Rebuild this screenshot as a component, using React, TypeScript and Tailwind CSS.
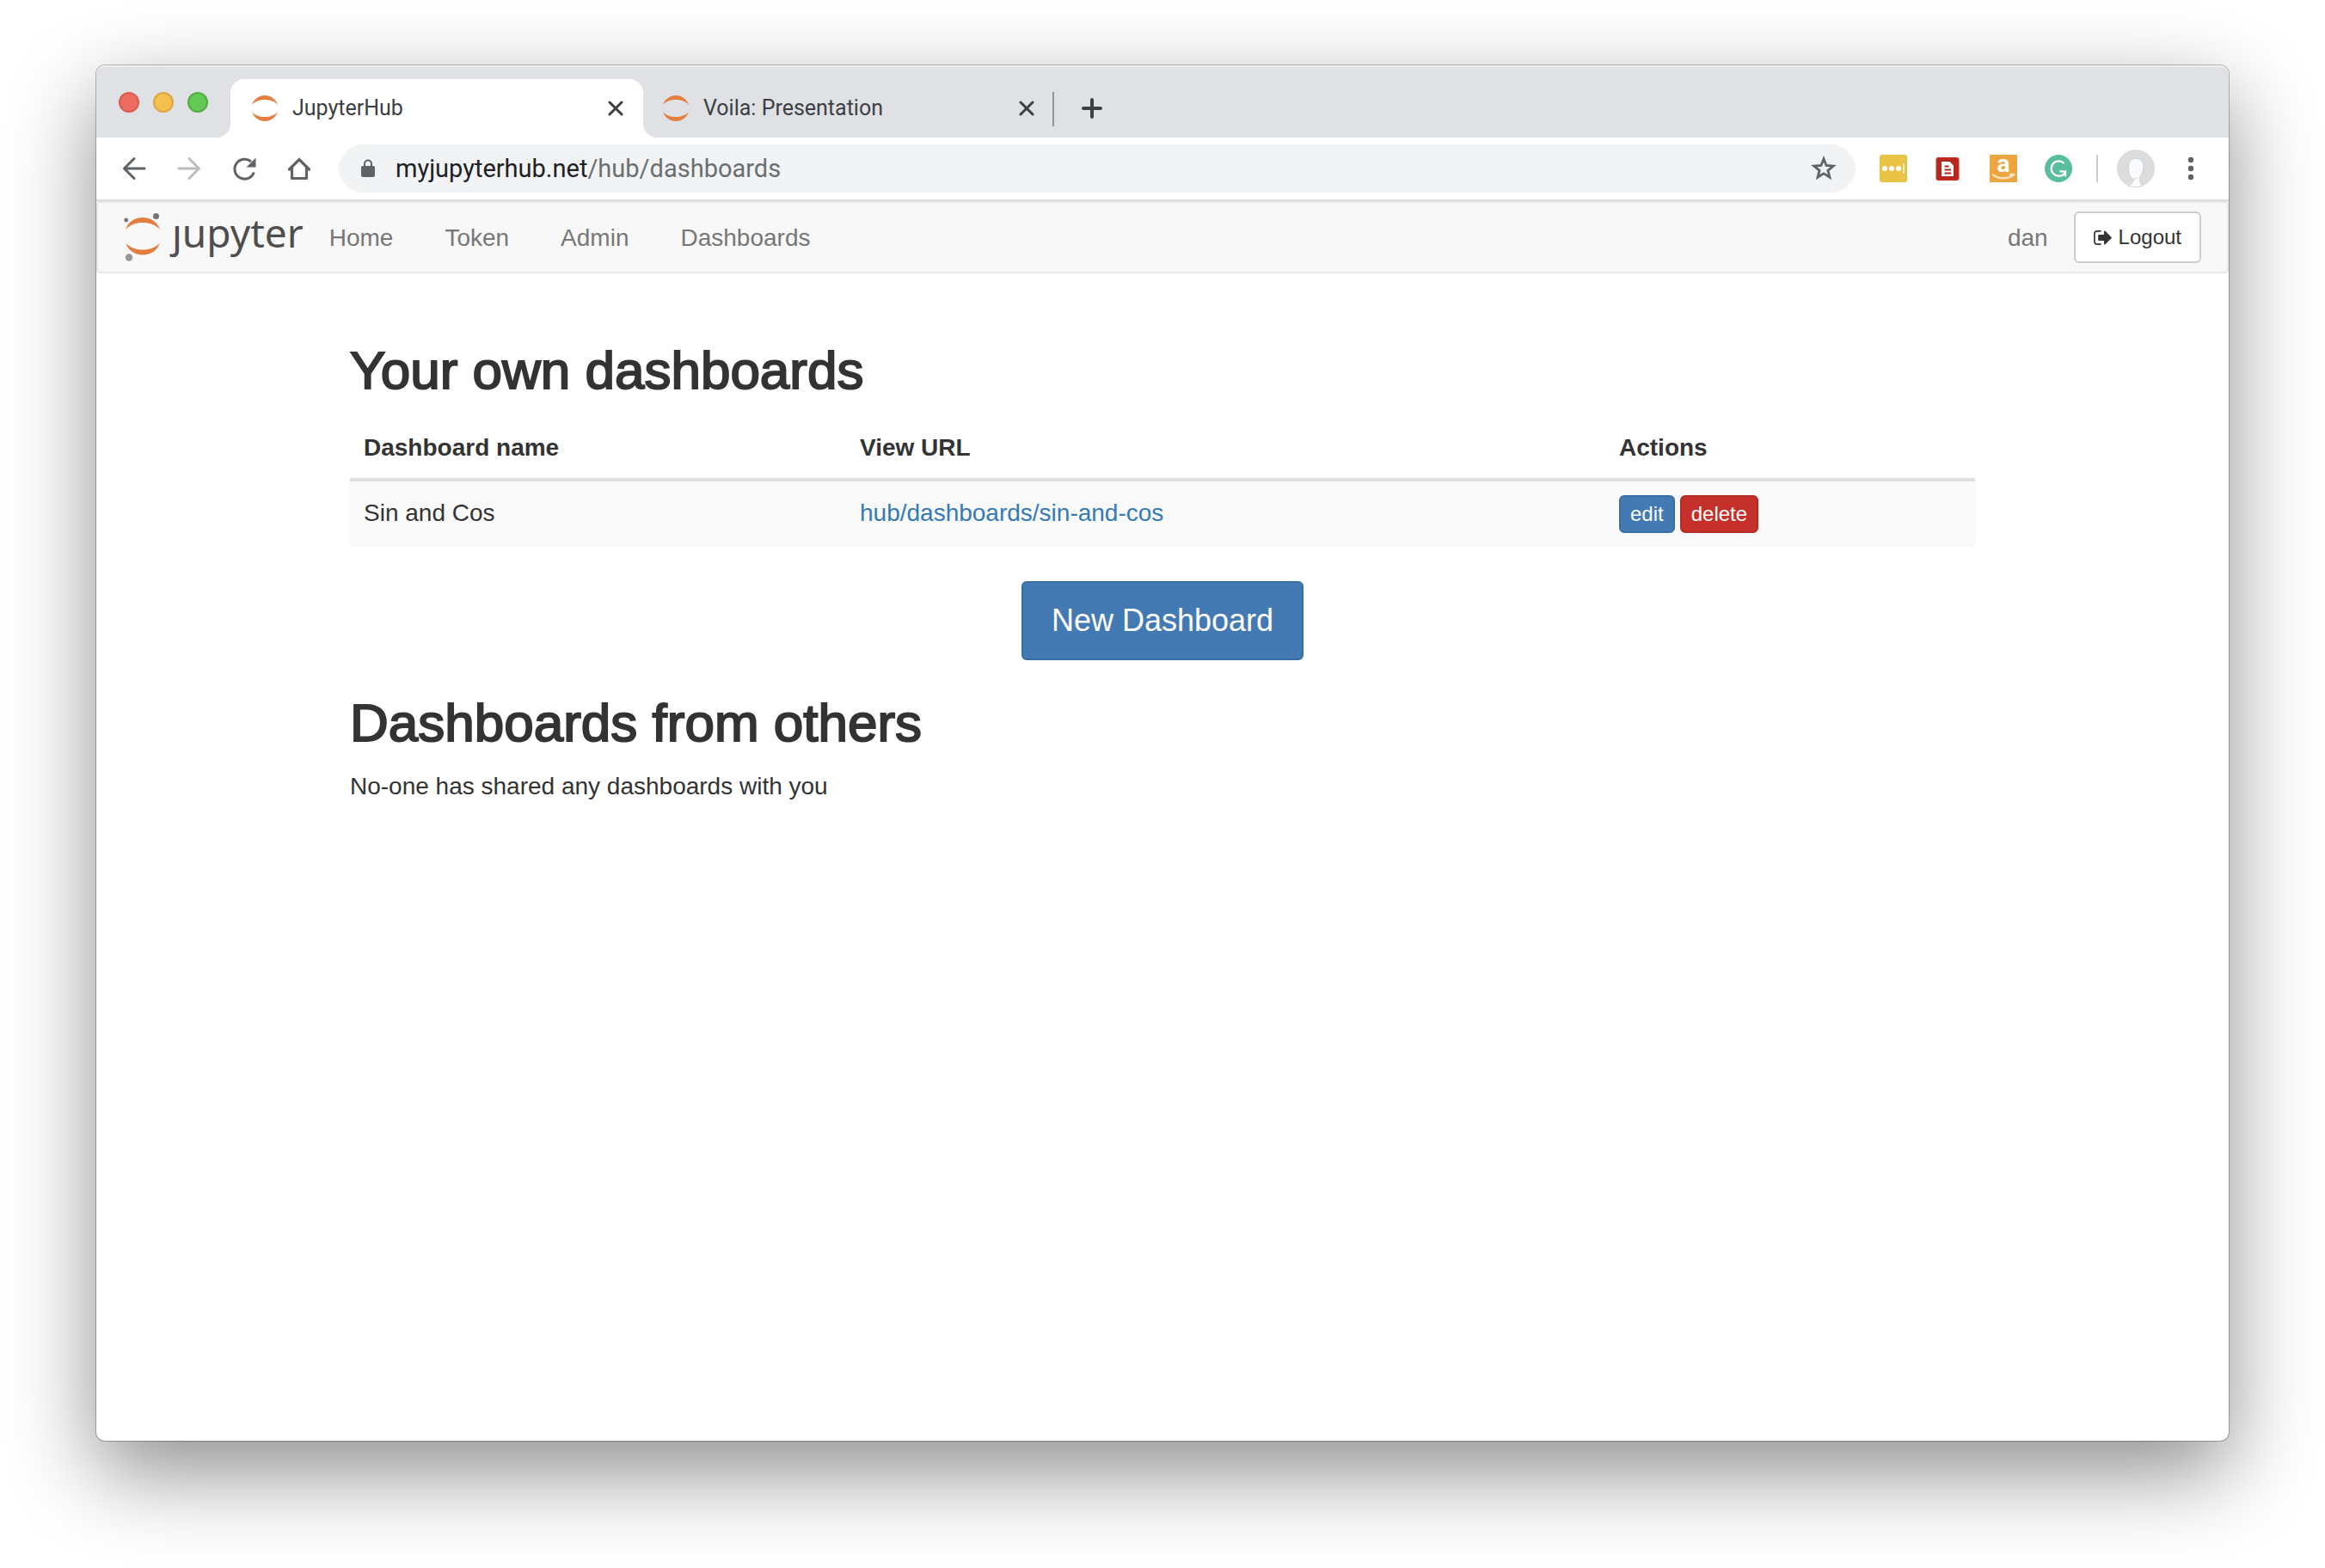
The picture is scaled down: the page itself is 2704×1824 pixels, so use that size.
import type { ReactNode } from "react";

function JupyterArcs({ className }: { className: string }) {
  return (
    <svg viewBox="0 0 30 30" className={className} aria-hidden="true" fill="#e37e3e">
      <path d="M0 10.7C2.4 4.2 8.2 0 15 0s12.600 4.200 15 10.700C26.500 7 21.200 4.900 15 4.900S3.500 7 0 10.700Z" />
      <path d="M0 19.300C2.400 25.800 8.200 30 15 30s12.600-4.200 15-10.700C26.500 23 21.200 25.100 15 25.100S3.500 23 0 19.300Z" />
    </svg>
  );
}

function CloseIcon() {
  return (
    <svg viewBox="0 0 18 18" className="size-[18px]" aria-hidden="true" fill="none" stroke="#3c4043" strokeWidth="3" strokeLinecap="round">
      <path d="M2 2l14 14M16 2L2 16" />
    </svg>
  );
}

function Tab({ title, active }: { title: string; active?: boolean }) {
  return (
    <div
      className={
        active
          ? "relative flex h-[68px] w-[480px] items-center rounded-t-2xl bg-white pr-[23px] pl-[25px]"
          : "relative flex h-[68px] w-[476px] items-center pr-[21px] pl-[23px]"
      }
    >
      {active && (
        <>
          <span className="absolute bottom-0 -left-4 size-4 bg-white">
            <span className="block size-4 rounded-br-2xl bg-[#dfe1e5]" />
          </span>
          <span className="absolute -right-4 bottom-0 size-4 bg-white">
            <span className="block size-4 rounded-bl-2xl bg-[#dfe1e5]" />
          </span>
        </>
      )}
      <JupyterArcs className="size-[30px]" />
      <span className="ml-[17px] flex-1 text-[25px] leading-8 text-[#3c4043]">{title}</span>
      <button type="button" aria-label={"Close " + title}>
        <CloseIcon />
      </button>
    </div>
  );
}

function TabStrip() {
  return (
    <div className="flex h-[84px] items-end rounded-t-[10px] border-t-2 border-[#eceef0] bg-[#dfe1e5]">
      <div className="flex h-full w-[156px] gap-4 pt-[29px] pl-[26px]">
        <span className="size-6 rounded-full border-2 border-[#dc5a50] bg-[#ed6b60]" />
        <span className="size-6 rounded-full border-2 border-[#dda53f] bg-[#f5c04f]" />
        <span className="size-6 rounded-full border-2 border-[#4fae40] bg-[#63ca56]" />
      </div>
      <Tab title="JupyterHub" active />
      <Tab title="Voila: Presentation" />
      <span className="mb-[13px] h-10 w-0.5 bg-[#919498]" />
      <button type="button" aria-label="New tab" className="mb-[22px] ml-8">
        <svg viewBox="0 0 24 24" className="size-6" aria-hidden="true" fill="none" stroke="#3c4043" strokeWidth="4" strokeLinecap="round">
          <path d="M12 2v20M2 12h20" />
        </svg>
      </button>
    </div>
  );
}

function ToolButton({ label, children }: { label: string; children: ReactNode }) {
  return (
    <button type="button" aria-label={label} className="flex size-8 items-center justify-center">
      {children}
    </button>
  );
}

function Toolbar() {
  return (
    <div className="flex h-[74px] items-center border-b-2 border-[#dadce0] bg-white pr-7 pl-7">
      <div className="flex gap-8">
        <ToolButton label="Back">
          <svg viewBox="0 0 32 32" className="size-8" fill="none" stroke="#5f6368" strokeWidth="3" strokeLinecap="round">
            <path d="M28 16H5M16 4.500L4.500 16 16 27.500" strokeLinejoin="round" />
          </svg>
        </ToolButton>
        <ToolButton label="Forward">
          <svg viewBox="0 0 32 32" className="size-8" fill="none" stroke="#babcbe" strokeWidth="3" strokeLinecap="round">
            <path d="M4 16h23M16 4.500L27.500 16 16 27.500" strokeLinejoin="round" />
          </svg>
        </ToolButton>
        <ToolButton label="Reload">
          <svg viewBox="0 0 32 32" className="size-8" fill="none" stroke="#5f6368" strokeWidth="3">
            <path d="M27.300 20.500A11.500 11.500 0 1 1 24 8" />
            <path d="M29.500 3.500v11h-11z" fill="#5f6368" stroke="none" />
          </svg>
        </ToolButton>
        <ToolButton label="Home">
          <svg viewBox="0 0 32 32" className="size-8" fill="none" stroke="#5f6368" strokeWidth="3.200" strokeLinejoin="round" strokeLinecap="round">
            <path d="M4.500 17L16 5.500 27.500 17" strokeLinejoin="miter" />
            <path d="M7.500 15v12.500h17V15" />
          </svg>
        </ToolButton>
      </div>
      <form className="ml-[30px] flex h-14 flex-1 items-center rounded-full bg-[#f1f3f4] px-[22px]">
        <svg viewBox="0 0 24 24" className="size-6" aria-hidden="true">
          <rect x="4" y="9" width="16" height="13" rx="2" fill="#5f6368" />
          <path d="M8 10V6.500a4 4 0 0 1 8 0V10" fill="none" stroke="#5f6368" strokeWidth="2" />
        </svg>
        <a href="#address" className="ml-5 flex-1 text-[29px] leading-8 text-[#6b6e71]">
          <span className="text-[#202124]">myjupyterhub.net</span>/hub/dashboards
        </a>
        <button type="button" aria-label="Bookmark this page">
          <svg viewBox="0 0 30 30" className="size-[30px]" fill="none" stroke="#5f6368" strokeWidth="2.800">
            <path d="M15 3.800l3 7.700 8.200.6-6.300 5.200 2.100 8L15 20.900l-7 4.400 2.100-8-6.300-5.200 8.200-.6z" />
          </svg>
        </button>
      </form>
      <div className="ml-7 flex items-center gap-8">
        <button type="button" aria-label="Password manager">
          <svg viewBox="0 0 32 32" className="size-8">
            <rect width="32" height="32" rx="3" fill="#e8c345" />
            <g fill="#fff">
              <circle cx="6" cy="16" r="3" />
              <circle cx="14" cy="16" r="3" />
              <circle cx="22" cy="16" r="3" />
              <rect x="27" y="10" width="2" height="12" opacity=".7" />
            </g>
          </svg>
        </button>
        <button type="button" aria-label="Document reader">
          <svg viewBox="0 0 32 32" className="size-8">
            <rect x="2.500" y="4" width="25" height="25" rx="2" fill="#b0281e" stroke="#c42a22" strokeWidth="2" />
            <path d="M8 8h9.500l4.500 4.500V25H8z" fill="#fff" />
            <path d="M11.500 13.500h5M11.500 17.500h7.500M11.500 21.500h7.500" stroke="#b0281e" strokeWidth="1.800" />
          </svg>
        </button>
        <button type="button" aria-label="Shopping assistant" className="flex size-8 flex-col items-center bg-[#eda63f]">
          <span className="h-[21px] text-[28px] leading-[22px] font-bold text-white">a</span>
          <svg viewBox="0 0 32 11" className="h-[11px] w-8" fill="none" stroke="#fbe3bd" strokeWidth="2.500" strokeLinecap="round">
            <path d="M4 2.500c7 5 17 5 24 0M24 2h4.500" />
          </svg>
        </button>
        <button type="button" aria-label="Writing assistant">
          <svg viewBox="0 0 32 32" className="size-8" fill="none" stroke="#fff" strokeWidth="2.300">
            <circle cx="16" cy="16" r="16" fill="#57bf9b" stroke="none" />
            <path d="M22.500 10A8.600 8.600 0 1 0 17 24.600c3 0 6-1.600 7.200-5" />
            <path d="M17.500 19.300h6.500v6" />
          </svg>
        </button>
      </div>
      <span className="ml-7 h-8 w-0.5 bg-[#c9cbce]" />
      <button type="button" aria-label="Profile" className="ml-[22px]">
        <svg viewBox="0 0 44 44" className="size-11">
          <circle cx="22" cy="22" r="22" fill="#dcdcdc" />
          <path d="M22 10.500c-5.500 0-8.500 3-8.500 9.500 0 7 1 12.500 6 14.500-.5 4-3.500 6.500-6.500 7.500 5 2.300 12 2.300 17 0-3-2-4.500-7-2.500-11.500 2.500-4.500 4-9 3-13.500-1-4.300-4-6.500-8.500-6.500z" fill="#f8fafc" stroke="#ccd3da" strokeWidth="1" />
          <path d="M19.500 34.500l4-1.500" stroke="#ccd3da" strokeWidth="1" />
        </svg>
      </button>
      <button type="button" aria-label="Menu" className="ml-[26px]">
        <svg viewBox="0 0 32 32" className="size-8" fill="#5f6368">
          <circle cx="16" cy="6" r="3.200" />
          <circle cx="16" cy="16" r="3.200" />
          <circle cx="16" cy="26" r="3.200" />
        </svg>
      </button>
    </div>
  );
}

function Navbar() {
  return (
    <nav className="flex h-[84px] items-center rounded-[4px] border-2 border-[#e7e7e7] bg-[#f8f8f8] pr-[30px] pl-[30px] text-[28px] leading-10 text-[#777]">
      <a href="#hub" aria-label="jupyter" className="flex items-center">
        <svg viewBox="0 0 44 56" className="h-14 w-11">
          <g fill="#e37e3e">
            <path d="M2 19C5 10.500 12.500 5 22 5s17 5.500 20 14C37 13.500 30 11 22 11S7 13.500 2 19Z" />
            <path d="M2 34.500C5 43 12.500 48.500 22 48.500S39 43 42 34.500C37 40 30 42.500 22 42.500S7 40 2 34.500Z" />
          </g>
          <circle cx="2.700" cy="8" r="2.400" fill="#757575" />
          <circle cx="37.500" cy="3.500" r="3.500" fill="#757575" />
          <circle cx="6" cy="51.500" r="4.200" fill="#989898" />
        </svg>
        <span className="ml-3 pb-3 font-['Noto_Sans'] text-[46px] leading-[60px] text-[#4e4e4e]">ȷupyter</span>
      </a>
      <div className="ml-[30px] flex flex-1 gap-[60px] pt-0.5">
        <a href="#home">Home</a>
        <a href="#token">Token</a>
        <a href="#admin">Admin</a>
        <a href="#dashboards">Dashboards</a>
      </div>
      <span className="pt-0.5">dan</span>
      <a href="#logout" className="ml-[30px] flex h-[60px] items-center gap-2 rounded-[6px] border-2 border-[#ccc] bg-white px-[21px] text-2xl text-[#333]">
        <svg viewBox="0 0 1568 1280" className="h-[17px] w-[21px]" fill="#333" aria-hidden="true">
          <path d="M640 1184q0 4 1 20t.5 26.500-3 23.500-10 19.500-20.500 6.500h-320q-119 0-203.500-84.500t-84.500-203.500v-704q0-119 84.500-203.500t203.500-84.500h320q13 0 22.500 9.500t9.500 22.500q0 4 1 20t.5 26.500-3 23.500-10 19.500-20.500 6.500h-320q-66 0-113 47t-47 113v704q0 66 47 113t113 47h312l11.500 1 11.500 3 8 5.500 7 9 2 13.500zm928-544q0 26-19 45l-544 544q-19 19-45 19t-45-19-19-45v-288h-448q-26 0-45-19t-19-45v-384q0-26 19-45t45-19h448v-288q0-26 19-45t45-19 45 19l544 544q19 19 19 45z" />
        </svg>
        Logout
      </a>
    </nav>
  );
}

function Heading({ children }: { children: ReactNode }) {
  return (
    <h2 className="text-[62px] leading-[66px] [-webkit-text-stroke:2px_#333]">{children}</h2>
  );
}

function Dashboards() {
  return (
    <main className="mx-auto w-full max-w-[1890px] pt-20 text-[28px] leading-10 text-[#333]">
      <Heading>Your own dashboards</Heading>
      <table className="mt-[21px] w-full table-fixed text-left">
        <colgroup>
          <col className="w-[577px]" />
          <col className="w-[883px]" />
          <col />
        </colgroup>
        <thead>
          <tr className="border-b-4 border-[#ddd]">
            <th className="px-4 pt-4 pb-[15px]">Dashboard name</th>
            <th className="px-4 pt-4 pb-[15px]">View URL</th>
            <th className="px-4 pt-4 pb-[15px]">Actions</th>
          </tr>
        </thead>
        <tbody>
          <tr className="bg-[#f9f9f9] align-top">
            <td className="px-4 pt-[17px]">Sin and Cos</td>
            <td className="px-4 pt-[17px]">
              <a href="#sin-and-cos" className="text-[#337ab7]">hub/dashboards/sin-and-cos</a>
            </td>
            <td className="p-4">
              <div className="flex gap-1.5 text-2xl leading-10 text-white">
                <button type="button" className="rounded-[6px] border-2 border-[#3a6da3] bg-[#447ab3] px-[11px]">edit</button>
                <button type="button" className="rounded-[6px] border-2 border-[#b12d27] bg-[#c5312a] px-[11px]">delete</button>
              </div>
            </td>
          </tr>
        </tbody>
      </table>
      <div className="mt-10 flex justify-center">
        <button type="button" className="rounded-[6px] border-2 border-[#3a6da3] bg-[#447ab3] px-[33px] py-5 text-4xl leading-[48px] text-white">
          New Dashboard
        </button>
      </div>
      <div className="mt-10">
        <Heading>Dashboards from others</Heading>
        <p className="mt-[21px]">No-one has shared any dashboards with you</p>
      </div>
    </main>
  );
}

export default function App() {
  return (
    <div className="flex min-h-screen flex-col bg-white px-28 pt-[76px] pb-[148px] font-['Liberation_Sans',Arial,sans-serif]">
      <div className="flex flex-1 flex-col rounded-[10px] bg-white shadow-[0_0_0_1px_rgba(0,0,0,0.25),0_36px_100px_rgba(0,0,0,0.45)]">
        <div className="font-[Roboto,sans-serif]">
          <TabStrip />
          <Toolbar />
        </div>
        <Navbar />
        <Dashboards />
      </div>
    </div>
  );
}
